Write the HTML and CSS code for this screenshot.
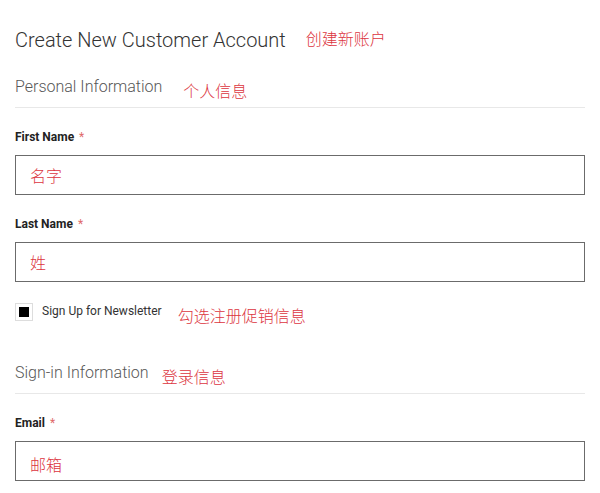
FILE: index.html
```html
<!DOCTYPE html>
<html lang="en">
<head>
    <meta charset="UTF-8">
    <meta name="viewport" content="width=device-width, initial-scale=1.0">
    <title>Create New Customer Account</title>
    <link rel="stylesheet" href="styles.css">
</head>
<body>
    <div class="page">
        <div class="page-title">
            <h1>Create New Customer Account</h1>
            <span class="note note-title">创建新账户</span>
        </div>

        <div class="section">
            <div class="legend">
                <span class="legend-text">Personal Information</span>
                <span class="note note-personal">个人信息</span>
            </div>
            <div class="field">
                <label for="firstname">First Name <span class="req">*</span></label>
                <input type="text" id="firstname" class="input" value="名字">
            </div>
            <div class="field">
                <label for="lastname">Last Name <span class="req">*</span></label>
                <input type="text" id="lastname" class="input" value="姓">
            </div>
            <div class="newsletter">
                <span class="checkbox"><span class="check-mark"></span></span>
                <span class="newsletter-text">Sign Up for Newsletter</span>
                <span class="note note-newsletter">勾选注册促销信息</span>
            </div>
        </div>

        <div class="section">
            <div class="legend">
                <span class="legend-text">Sign-in Information</span>
                <span class="note note-signin">登录信息</span>
            </div>
            <div class="field">
                <label for="email">Email <span class="req">*</span></label>
                <input type="text" id="email" class="input input-email" value="邮箱">
            </div>
        </div>
    </div>
</body>
</html>
```

FILE: styles.css
```css
body {
    margin: 0;
    background: #fff;
    font-family: Roboto, "Noto Sans CJK SC", sans-serif;
    color: #333;
}
.page {
    padding: 28px 15px 0;
}
.page-title {
    display: flex;
    align-items: flex-start;
}
.page-title h1 {
    margin: 0;
    font-size: 20px;
    line-height: 24px;
    font-weight: 300;
    color: #333;
}
.note {
    font-family: "Noto Sans CJK SC", sans-serif;
    font-size: 16px;
    line-height: 20px;
    font-weight: 300;
    color: #dc3540;
}
.note-title {
    margin: 0 0 0 20px;
}
.section {
    margin-top: 25px;
}
.section + .section {
    margin-top: 42px;
}
.legend {
    display: flex;
    align-items: flex-start;
    height: 20px;
    padding-bottom: 10px;
    border-bottom: 1px solid #e8e8e8;
}
.legend-text {
    font-size: 16px;
    line-height: 20px;
    font-weight: 300;
    color: #575757;
}
.note-personal {
    margin: 3px 0 0 21px;
}
.note-signin {
    margin: 3px 0 0 13px;
}
.field {
    margin-top: 21px;
}
.field label {
    display: block;
    font-size: 12px;
    line-height: 16px;
    font-weight: 700;
    color: #222;
    margin-bottom: 10px;
}
.req {
    color: #e06a6a;
    font-weight: 400;
    margin-left: 2px;
}
.input {
    display: block;
    box-sizing: border-box;
    width: 100%;
    height: 40px;
    margin: 0;
    padding: 0 14px;
    border: 1px solid #6b6b6b;
    border-radius: 0;
    background: #fff;
    font-family: "Noto Sans CJK SC", sans-serif;
    font-size: 16px;
    font-weight: 300;
    color: #dc3540;
    outline: none;
}
.input-email {
    padding-top: 5px;
}
.newsletter {
    display: flex;
    align-items: flex-start;
    height: 18px;
    margin-top: 21px;
}
.checkbox {
    display: flex;
    align-items: center;
    justify-content: center;
    box-sizing: border-box;
    width: 18px;
    height: 18px;
    border: 1px solid #ddd;
}
.check-mark {
    width: 10px;
    height: 10px;
    background: #000;
}
.newsletter-text {
    margin-left: 9px;
    font-size: 12px;
    line-height: 16px;
    color: #333;
}
.note-newsletter {
    margin: 2px 0 0 16px;
}
```
